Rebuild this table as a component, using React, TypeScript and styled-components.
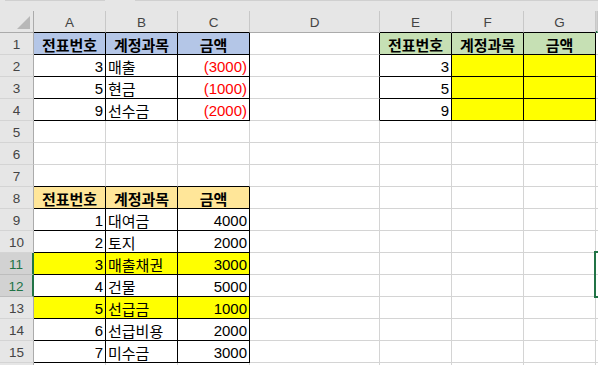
import { styled, createGlobalStyle } from "styled-components";

const GlobalStyle = createGlobalStyle`
  body {
    margin: 0;
    background: #ffffff;
    overflow: hidden;
  }
`;

const COLS = "34px 72px 72px 72px 130px 72px 72px 72px 1fr";
const GRID = "#d4d4d4";
const HEAD_BG = "#e6e6e6";
const GREEN = "#217346";

const Sheet = styled.div`
  position: relative;
  width: 598px;
  height: 365px;
  overflow: hidden;
  display: flex;
  flex-direction: column;
  font-family: "Liberation Sans", "Noto Sans CJK KR", sans-serif;
`;

const TopStrip = styled.div`
  height: 11px;
  flex: none;
  background: ${HEAD_BG};
  display: flex;
  gap: 30px;
  padding-left: 5px;
`;

const StripLine = styled.div<{ $w: number }>`
  width: ${(p) => p.$w}px;
  height: 1px;
  background: #d0d0d0;
`;

const Row = styled.div<{ $h?: number }>`
  display: grid;
  grid-template-columns: ${COLS};
  height: ${(p) => p.$h ?? 22}px;
  flex: none;
`;

const ColHead = styled.div<{ $sel?: boolean; $bottom?: string }>`
  background: ${(p) => (p.$sel ? "#d2d2d2" : HEAD_BG)};
  border-right: 1px solid #c8c8c8;
  border-bottom: ${(p) => (p.$sel ? `2px solid ${GREEN}` : `1px solid ${p.$bottom ?? "#ababab"}`)};
  color: #444444;
  font-size: 13.5px;
  display: flex;
  align-items: center;
  justify-content: center;
  padding-top: 2px;
  box-sizing: border-box;
`;

const Corner = styled(ColHead)`
  position: relative;
  border-right: 1px solid #ababab;
`;

const CornerTriangle = styled.div`
  position: absolute;
  right: 3px;
  bottom: 3px;
  width: 0;
  height: 0;
  border-left: 13px solid transparent;
  border-bottom: 13px solid #b8b8b8;
`;

const RowHead = styled.div<{ $sel?: boolean }>`
  background: ${(p) => (p.$sel ? "#d2d2d2" : HEAD_BG)};
  color: ${(p) => (p.$sel ? GREEN : "#444444")};
  border-right: ${(p) => (p.$sel ? `2px solid ${GREEN}` : "1px solid #ababab")};
  border-bottom: 1px solid ${(p) => (p.$sel ? "#bdbdbd" : GRID)};
  font-size: 13.5px;
  display: flex;
  align-items: center;
  justify-content: center;
  padding-top: 1px;
  box-sizing: border-box;
`;

const Cell = styled.div<{
  $bg?: string;
  $align?: "left" | "right" | "center";
  $bold?: boolean;
  $color?: string;
  $right?: string;
  $bottom?: string;
}>`
  background: ${(p) => p.$bg ?? "#ffffff"};
  border-right: 1px solid ${(p) => p.$right ?? GRID};
  border-bottom: 1px solid ${(p) => p.$bottom ?? GRID};
  color: ${(p) => p.$color ?? "#000000"};
  font-size: 15px;
  font-weight: ${(p) => (p.$bold ? 700 : 400)};
  display: flex;
  align-items: center;
  justify-content: ${(p) =>
    p.$align === "right" ? "flex-end" : p.$align === "center" ? "center" : "flex-start"};
  padding: 1px 2px 0 2px;
  box-sizing: border-box;
  white-space: nowrap;
  overflow: hidden;
`;

const Selection = styled.div`
  position: absolute;
  left: 594px;
  top: 251px;
  width: 20px;
  height: 47px;
  border: 2px solid ${GREEN};
  box-sizing: border-box;
`;

type CellDef = {
  text?: string;
  bg?: string;
  align?: "left" | "right" | "center";
  bold?: boolean;
  color?: string;
  right?: string;
  bottom?: string;
};

const BLUE = "#b4c6e7";
const LGREEN = "#c6e0b4";
const ORANGE = "#ffe699";
const YELLOW = "#ffff00";
const BLACK = "#000000";
const RED = "#ff0000";

const box = (c: CellDef): CellDef => ({ right: BLACK, bottom: BLACK, ...c });
const head = (text: string, bg: string): CellDef =>
  box({ text, bg, bold: true, align: "center" });
const num = (text: string, extra: CellDef = {}): CellDef =>
  box({ text, align: "right", ...extra });
const name = (text: string, extra: CellDef = {}): CellDef =>
  box({ text, align: "left", ...extra });

const empty = (n: number): CellDef[] => Array.from({ length: n }, () => ({}));

const topTable = [
  ["3", "매출", "(3000)"],
  ["5", "현금", "(1000)"],
  ["9", "선수금", "(2000)"],
];

const bottomTable: [string, string, string, boolean][] = [
  ["1", "대여금", "4000", false],
  ["2", "토지", "2000", false],
  ["3", "매출채권", "3000", true],
  ["4", "건물", "5000", false],
  ["5", "선급금", "1000", true],
  ["6", "선급비용", "2000", false],
  ["7", "미수금", "3000", false],
];

const rows: CellDef[][] = [
  [
    head("전표번호", BLUE),
    head("계정과목", BLUE),
    head("금액", BLUE),
    { right: BLACK },
    head("전표번호", LGREEN),
    head("계정과목", LGREEN),
    head("금액", LGREEN),
    {},
  ],
  ...topTable.map(([n, t, a]) => [
    num(n),
    name(t),
    num(a, { color: RED }),
    { right: BLACK },
    num(n),
    box({ bg: YELLOW }),
    box({ bg: YELLOW }),
    {},
  ]),
  empty(8),
  empty(8),
  [{ bottom: BLACK }, { bottom: BLACK }, { bottom: BLACK }, ...empty(5)],
  [head("전표번호", ORANGE), head("계정과목", ORANGE), head("금액", ORANGE), ...empty(5)],
  ...bottomTable.map(([n, t, a, hl]) => {
    const bg = hl ? YELLOW : undefined;
    return [num(n, { bg }), name(t, { bg }), num(a, { bg }), ...empty(5)];
  }),
  empty(8),
];

// column H sits past the right edge, only its border shows
const letters = ["A", "B", "C", "D", "E", "F", "G", ""];

const App = () => {
  return (
    <>
      <GlobalStyle />
      <Sheet>
        <TopStrip>
          <StripLine $w={102} />
          <StripLine $w={470} />
        </TopStrip>
        <Row>
          <Corner>
            <CornerTriangle />
          </Corner>
          {letters.map((l, i) => (
            <ColHead
              key={i}
              $sel={i === 7}
              $bottom={i <= 2 || (i >= 4 && i <= 6) ? BLACK : undefined}
            >
              {l}
            </ColHead>
          ))}
        </Row>
        {rows.map((cells, r) => (
          <Row key={r}>
            <RowHead $sel={r === 10 || r === 11}>{r < 15 ? r + 1 : ""}</RowHead>
            {cells.map((c, i) => (
              <Cell
                key={i}
                $bg={c.bg}
                $align={c.align}
                $bold={c.bold}
                $color={c.color}
                $right={c.right}
                $bottom={c.bottom}
              >
                {c.text}
              </Cell>
            ))}
          </Row>
        ))}
        <Selection />
      </Sheet>
    </>
  );
};

export default App;
